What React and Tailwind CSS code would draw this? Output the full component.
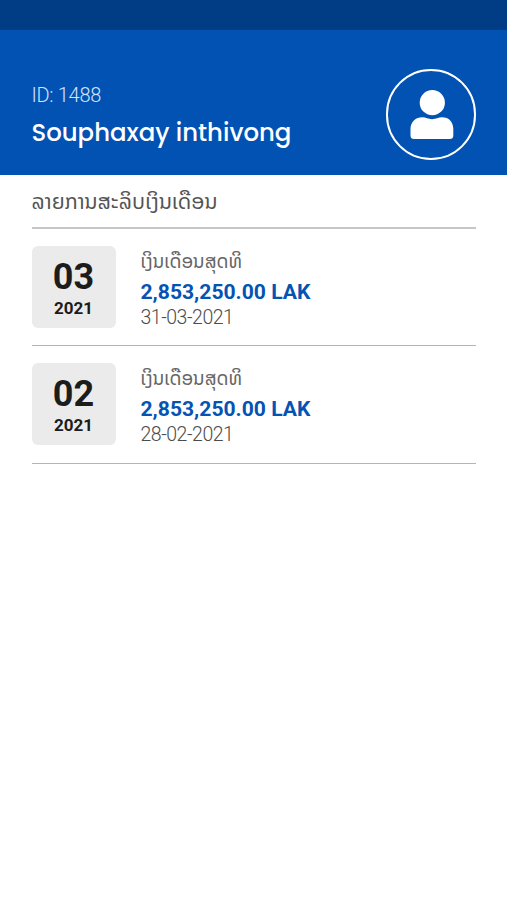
const slips = [
  { month: "03", year: "2021", amount: "2,853,250.00 LAK", date: "31-03-2021" },
  { month: "02", year: "2021", amount: "2,853,250.00 LAK", date: "28-02-2021" },
];

function Avatar() {
  return (
    <div className="flex h-[91px] w-[90px] items-center justify-center rounded-full border-[2.5px] border-white">
      <svg width="44" height="50" viewBox="0 0 44 50" className="ml-px fill-white">
        <circle cx="22.3" cy="12.7" r="12.6" />
        <path d="M12.5 27.3C16 27.3 18 29.2 22 29.2S28.5 27.3 32 27.3C39 27.3 43.3 32 43.3 39V45.5Q43.3 49 39.8 49H4Q.5 49 .5 45.5V39C.5 32 5.5 27.3 12.5 27.3Z" />
      </svg>
    </div>
  );
}

function SlipRow({ slip }) {
  return (
    <li className="flex h-[117.5px] items-start border-b border-[#b4b4b4] pt-[17px]">
      {/* Month box */}
      <div className="flex h-[82px] w-[84px] flex-col items-center rounded-md bg-[#ebebeb] pt-[11px] text-[#1c1c1c]">
        <span className="text-[36px] leading-[40px] font-bold">{slip.month}</span>
        <span className="mt-[2px] text-[17px] leading-[18px] font-bold">{slip.year}</span>
      </div>

      {/* Amount and pay date */}
      <div className="ml-[25px] whitespace-nowrap">
        <p className="h-[32px] font-['Noto_Sans_Lao','Noto_Sans','DejaVu_Sans',sans-serif] text-[18.8px] leading-[31px] text-[#666]">
          ເງິນເດືອນສຸດທິ
        </p>
        <p className="text-[21.1px] leading-[28px] font-bold text-[#0553b3]">{slip.amount}</p>
        <p className="text-[19.5px] leading-[23px] font-light tracking-[-0.48px] text-[#4c4c4c]">{slip.date}</p>
      </div>
    </li>
  );
}

export default function App() {
  return (
    <div className="h-[900px] w-[507px] overflow-hidden bg-white font-['Roboto',sans-serif]">
      {/* Status bar */}
      <div className="h-[30px] bg-[#003d84]" />

      {/* Profile header */}
      <header className="flex h-[145px] items-start justify-between bg-[#0252b3] pt-[39px] pr-[31px] pl-[31.5px] text-white">
        <div className="pt-[14px]">
          <p className="text-[20px] leading-[24px] font-light tracking-[-0.3px] text-[#d4e4fa]">ID: 1488</p>
          <h1 className="mt-[10px] font-['Poppins','Inter',sans-serif] text-[24.4px] leading-[31px] font-medium whitespace-nowrap [font-feature-settings:'cv11']">
            Souphaxay inthivong
          </h1>
        </div>
        <Avatar />
      </header>

      {/* Salary slips */}
      <main className="pr-[31px] pl-[31.5px]">
        <h2 className="h-[53.5px] border-b-2 border-[#c6c6c6] font-['Noto_Sans_Lao','Noto_Sans','DejaVu_Sans',sans-serif] text-[21.2px] leading-[53px] text-[#555]">
          ລາຍການສະລິບເງິນເດືອນ
        </h2>
        <ul>
          {slips.map((slip) => (
            <SlipRow key={slip.month} slip={slip} />
          ))}
        </ul>
      </main>
    </div>
  );
}
